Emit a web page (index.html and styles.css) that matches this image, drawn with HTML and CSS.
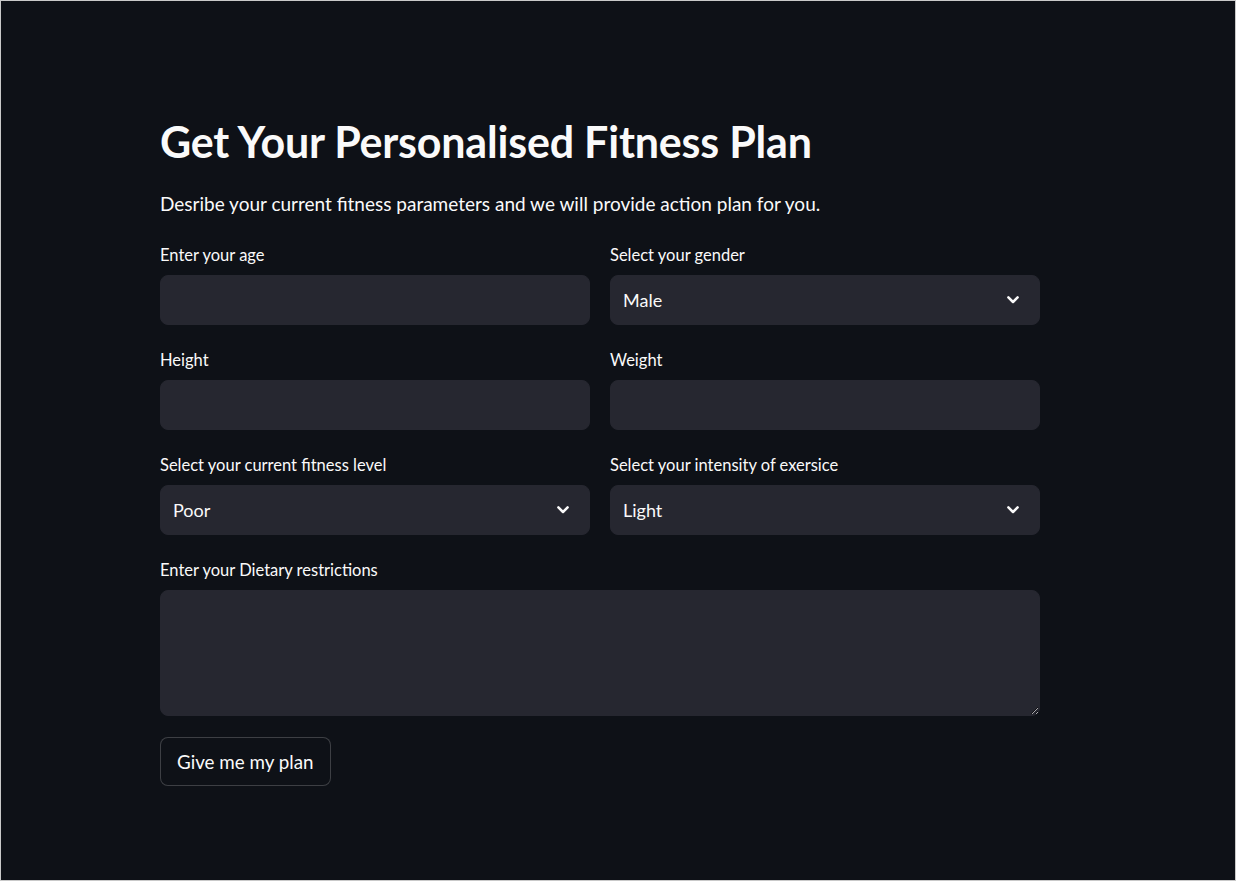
FILE: index.html
```html
<!DOCTYPE html>
<html lang="en">
<head>
<meta charset="utf-8">
<title>Fitness Plan</title>
<link rel="stylesheet" href="styles.css">
</head>
<body>
<main class="app">
  <div class="block">
    <h1 class="title">Get Your Personalised Fitness Plan</h1>
    <p class="lead">Desribe your current fitness parameters and we will provide action plan for you.</p>
    <div class="form-grid">
      <div class="field">
        <label class="label">Enter your age</label>
        <input class="input" type="text">
      </div>
      <div class="field">
        <label class="label">Select your gender</label>
        <div class="select"><span class="select-value">Male</span>
          <svg class="chev" width="12" height="8" viewBox="0 0 12 8"><path d="M1.4 1.4L6 6l4.6-4.6" fill="none" stroke="#fafafa" stroke-width="2.5" stroke-linecap="round" stroke-linejoin="round"/></svg>
        </div>
      </div>
      <div class="field">
        <label class="label">Height</label>
        <input class="input" type="text">
      </div>
      <div class="field">
        <label class="label">Weight</label>
        <input class="input" type="text">
      </div>
      <div class="field">
        <label class="label">Select your current fitness level</label>
        <div class="select"><span class="select-value">Poor</span>
          <svg class="chev" width="12" height="8" viewBox="0 0 12 8"><path d="M1.4 1.4L6 6l4.6-4.6" fill="none" stroke="#fafafa" stroke-width="2.5" stroke-linecap="round" stroke-linejoin="round"/></svg>
        </div>
      </div>
      <div class="field">
        <label class="label">Select your intensity of exersice</label>
        <div class="select"><span class="select-value">Light</span>
          <svg class="chev" width="12" height="8" viewBox="0 0 12 8"><path d="M1.4 1.4L6 6l4.6-4.6" fill="none" stroke="#fafafa" stroke-width="2.5" stroke-linecap="round" stroke-linejoin="round"/></svg>
        </div>
      </div>
      <div class="field wide">
        <label class="label">Enter your Dietary restrictions</label>
        <textarea class="textarea"></textarea>
      </div>
    </div>
    <button class="btn" type="button">Give me my plan</button>
  </div>
</main>
</body>
</html>
```
FILE: styles.css
```css
html, body {
  margin: 0;
  padding: 0;
}
body {
  background: #0e1117;
  color: #fafafa;
  font-family: "Lato", "Liberation Sans", sans-serif;
  color-scheme: dark;
}
.app {
  box-sizing: border-box;
  min-height: 881px;
  border: 1px solid #c9c9c9;
  padding-top: 117px;
}
.block {
  width: 880px;
  margin-left: 159px;
}
.title {
  margin: 0;
  font-size: 43px;
  line-height: 48px;
  font-weight: 700;
  letter-spacing: -0.2px;
}
.lead {
  margin: 26px 0 0;
  font-size: 19px;
  line-height: 24px;
}
.form-grid {
  margin-top: 29px;
  display: grid;
  grid-template-columns: 1fr 1fr;
  column-gap: 20px;
  row-gap: 25px;
}
.field {
  display: flex;
  flex-direction: column;
  gap: 10px;
}
.field.wide {
  grid-column: 1 / span 2;
}
.label {
  font-size: 16.5px;
  line-height: 20px;
}
.input, .select, .textarea {
  box-sizing: border-box;
  background: #262730;
  border: 1px solid #262730;
  border-radius: 8px;
  color: #fafafa;
  font-family: inherit;
  font-size: 18px;
  outline: none;
}
.input {
  height: 50px;
  padding: 0 13px;
}
.select {
  height: 50px;
  display: flex;
  align-items: center;
  justify-content: space-between;
  padding: 0 20px 0 12px;
}
.select-value {
  font-size: 18px;
}
.chev {
  display: block;
}
.textarea {
  height: 126px;
  resize: vertical;
  padding: 12px 13px;
  display: block;
}
.btn {
  margin-top: 21px;
  height: 49px;
  padding: 0 16px;
  background: #0e1117;
  color: #fafafa;
  border: 1px solid rgba(250, 250, 250, 0.2);
  border-radius: 8px;
  font-family: inherit;
  font-size: 18.8px;
}
```
